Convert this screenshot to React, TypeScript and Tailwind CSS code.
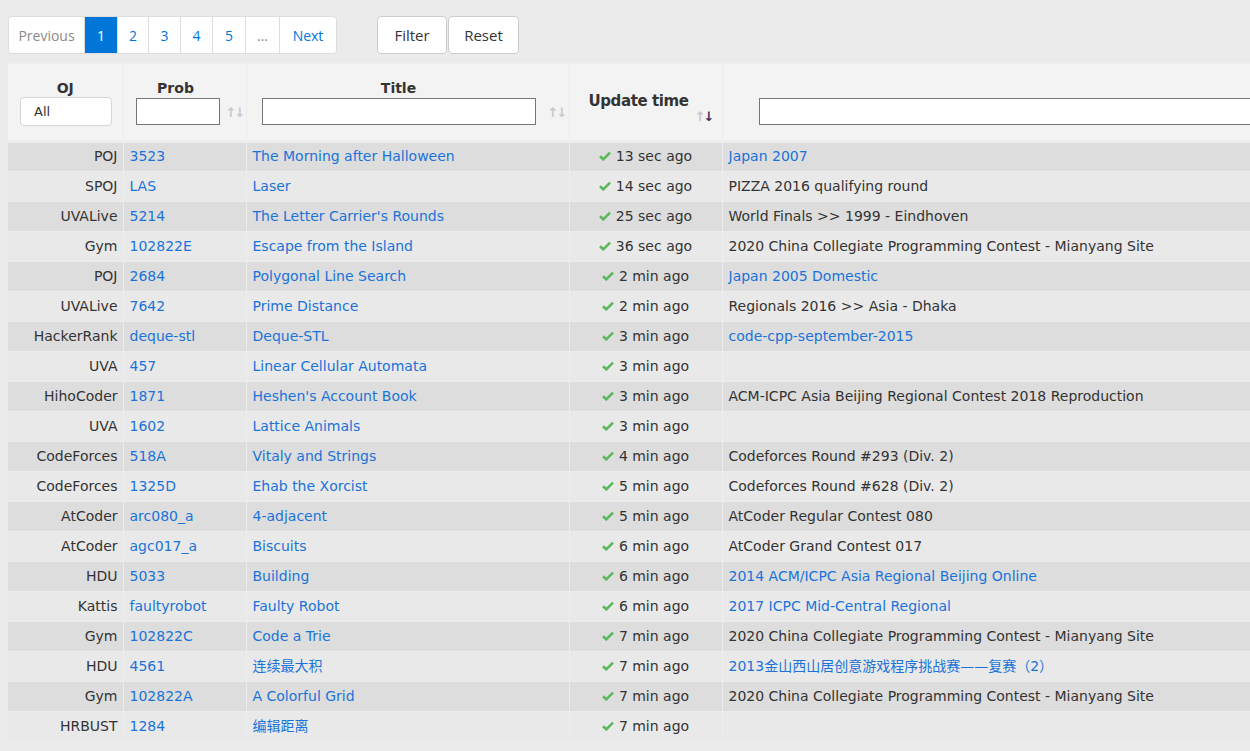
import React from 'react';

type Row = {
  oj: string;
  prob: string;
  title: string;
  time: string;
  source: string;
  sourceLink?: boolean;
};

const rows: Row[] = [
  { oj: 'POJ', prob: '3523', title: 'The Morning after Halloween', time: '13 sec ago', source: 'Japan 2007', sourceLink: true },
  { oj: 'SPOJ', prob: 'LAS', title: 'Laser', time: '14 sec ago', source: 'PIZZA 2016 qualifying round' },
  { oj: 'UVALive', prob: '5214', title: "The Letter Carrier's Rounds", time: '25 sec ago', source: 'World Finals >> 1999 - Eindhoven' },
  { oj: 'Gym', prob: '102822E', title: 'Escape from the Island', time: '36 sec ago', source: '2020 China Collegiate Programming Contest - Mianyang Site' },
  { oj: 'POJ', prob: '2684', title: 'Polygonal Line Search', time: '2 min ago', source: 'Japan 2005 Domestic', sourceLink: true },
  { oj: 'UVALive', prob: '7642', title: 'Prime Distance', time: '2 min ago', source: 'Regionals 2016 >> Asia - Dhaka' },
  { oj: 'HackerRank', prob: 'deque-stl', title: 'Deque-STL', time: '3 min ago', source: 'code-cpp-september-2015', sourceLink: true },
  { oj: 'UVA', prob: '457', title: 'Linear Cellular Automata', time: '3 min ago', source: '' },
  { oj: 'HihoCoder', prob: '1871', title: "Heshen's Account Book", time: '3 min ago', source: 'ACM-ICPC Asia Beijing Regional Contest 2018 Reproduction' },
  { oj: 'UVA', prob: '1602', title: 'Lattice Animals', time: '3 min ago', source: '' },
  { oj: 'CodeForces', prob: '518A', title: 'Vitaly and Strings', time: '4 min ago', source: 'Codeforces Round #293 (Div. 2)' },
  { oj: 'CodeForces', prob: '1325D', title: 'Ehab the Xorcist', time: '5 min ago', source: 'Codeforces Round #628 (Div. 2)' },
  { oj: 'AtCoder', prob: 'arc080_a', title: '4-adjacent', time: '5 min ago', source: 'AtCoder Regular Contest 080' },
  { oj: 'AtCoder', prob: 'agc017_a', title: 'Biscuits', time: '6 min ago', source: 'AtCoder Grand Contest 017' },
  { oj: 'HDU', prob: '5033', title: 'Building', time: '6 min ago', source: '2014 ACM/ICPC Asia Regional Beijing Online', sourceLink: true },
  { oj: 'Kattis', prob: 'faultyrobot', title: 'Faulty Robot', time: '6 min ago', source: '2017 ICPC Mid-Central Regional', sourceLink: true },
  { oj: 'Gym', prob: '102822C', title: 'Code a Trie', time: '7 min ago', source: '2020 China Collegiate Programming Contest - Mianyang Site' },
  { oj: 'HDU', prob: '4561', title: '连续最大积', time: '7 min ago', source: '2013金山西山居创意游戏程序挑战赛——复赛（2）', sourceLink: true },
  { oj: 'Gym', prob: '102822A', title: 'A Colorful Grid', time: '7 min ago', source: '2020 China Collegiate Programming Contest - Mianyang Site' },
  { oj: 'HRBUST', prob: '1284', title: '编辑距离', time: '7 min ago', source: '' },
];

const Check = () => (
  <svg viewBox="0 0 12 10" className="inline-block w-[12px] h-[10px] mr-[5px] -mt-[2px]">
    <path d="M1 5.2 L4.3 8.3 L11 1.6" fill="none" stroke="#5cb85c" strokeWidth="2.6" strokeLinejoin="miter" />
  </svg>
);

const SortIcon = ({ active }: { active?: boolean }) => (
  <span className="text-[13px] leading-none tracking-[-2px] select-none" style={{ fontFamily: '"DejaVu Sans", sans-serif' }}>
    <span className="text-[#c8c8c8]">↑</span>
    <span className={active ? 'text-[#3d2b5e]' : 'text-[#c8c8c8]'}>↓</span>
  </span>
);

const pageItems = ['Previous', '1', '2', '3', '4', '5', '…', 'Next'];
const pageWidths = ['w-[75px]', 'w-[33px]', 'w-[31px]', 'w-[32px]', 'w-[32px]', 'w-[33px]', 'w-[34px]', 'w-[57px]'];

export default function App() {
  return (
    <div className="min-h-[751px] w-full overflow-hidden bg-[#ebebeb] text-[#333]" style={{ fontFamily: '"DejaVu Sans", "Noto Sans CJK SC", sans-serif' }}>
      <div className="flex items-center pt-[16px] pl-[8px]" style={{ fontFamily: '"Open Sans", sans-serif' }}>
        <div className="flex h-[38px] rounded-[4px] border border-[#dddddd] bg-white overflow-hidden text-[14px]">
          {pageItems.map((p, i) => (
            <div
              key={p}
              className={`${pageWidths[i]} flex items-center justify-center ${i > 0 ? 'border-l border-[#dddddd]' : ''} ${
                p === '1' ? 'bg-[#0275d8] text-white border-[#0275d8]' : p === 'Previous' ? 'text-[#8a8a8a]' : p === '…' ? 'text-[#8a8a8a]' : 'text-[#0275d8]'
              }`}
            >
              {p}
            </div>
          ))}
        </div>
        <div className="flex ml-[40px] gap-[1px] text-[15px] text-[#333]">
          <button className="w-[70px] h-[38px] bg-white border border-[#cccccc] rounded-[4px]">Filter</button>
          <button className="w-[71px] h-[38px] bg-white border border-[#cccccc] rounded-[4px]">Reset</button>
        </div>
      </div>

      <div className="mt-[8px] ml-[8px] w-[1400px] border-t-2 border-[#efefef]">
        <table className="table-fixed border-collapse w-[1400px] text-[14px]">
          <colgroup>
            <col className="w-[115px]" />
            <col className="w-[123px]" />
            <col className="w-[323px]" />
            <col className="w-[153px]" />
            <col />
          </colgroup>
          <thead>
            <tr className="h-[77px] bg-[#f3f3f3] border-b-[3px] border-[#ededed]">
              <th className="border-r border-[#ececec] px-[12px] align-top pt-[15px]">
                <div className="text-[14px] font-bold text-[#333] leading-[18px]">OJ</div>
                <div className="h-[29px] w-[92px] rounded-[4px] border border-[#d6d6d6] bg-white text-left pl-[13px] text-[13px] font-normal leading-[28px]">All</div>
              </th>
              <th className="border-r border-[#ececec] pl-[12px] pr-0 align-top pt-[15px]">
                <div className="text-[14px] font-bold leading-[18px] pr-[30px]">Prob</div>
                <div className="mt-[1px] flex items-end">
                  <div className="h-[27px] w-[84px] border border-[#767676] bg-white" />
                  <span className="ml-[6px] mb-[2px]"><SortIcon /></span>
                </div>
              </th>
              <th className="border-r border-[#ececec] pl-[15px] pr-0 align-top pt-[15px]">
                <div className="text-[14px] font-bold leading-[18px] pr-[33px]">Title</div>
                <div className="mt-[1px] flex items-end">
                  <div className="h-[27px] w-[274px] border border-[#767676] bg-white" />
                  <span className="ml-[12px] mb-[2px]"><SortIcon /></span>
                </div>
              </th>
              <th className="border-r border-[#ececec] pl-[19px] text-left align-top pt-[28px]">
                <div className="text-[15px] font-bold leading-[18px] tracking-[-0.4px]">Update time</div>
                <div className="flex justify-end pr-[9px] mt-[0px]">
                  <SortIcon active />
                </div>
              </th>
              <th className="pl-[36px] align-top pt-[34px]">
                <div className="h-[27px] w-[700px] border border-[#767676] bg-white" />
              </th>
            </tr>
          </thead>
          <tbody>
            {rows.map((r, i) => (
              <tr key={i} className={`h-[30px] border-b border-[#ededed] ${i % 2 === 0 ? 'bg-[#dddddd]' : 'bg-[#e9e9e9]'}`}>
                <td className="border-r border-[#ededed] text-right pr-[5px] whitespace-nowrap">{r.oj}</td>
                <td className="border-r border-[#ededed] pl-[6px] text-[#1a73d9] whitespace-nowrap">{r.prob}</td>
                <td className="border-r border-[#ededed] pl-[6px] text-[#1a73d9] whitespace-nowrap">{r.title}</td>
                <td className="border-r border-[#ededed] text-center whitespace-nowrap">
                  <Check />
                  {r.time}
                </td>
                <td className={`pl-[6px] whitespace-nowrap ${r.sourceLink ? 'text-[#1a73d9]' : ''}`}>{r.source}</td>
              </tr>
            ))}
          </tbody>
        </table>
      </div>
    </div>
  );
}
